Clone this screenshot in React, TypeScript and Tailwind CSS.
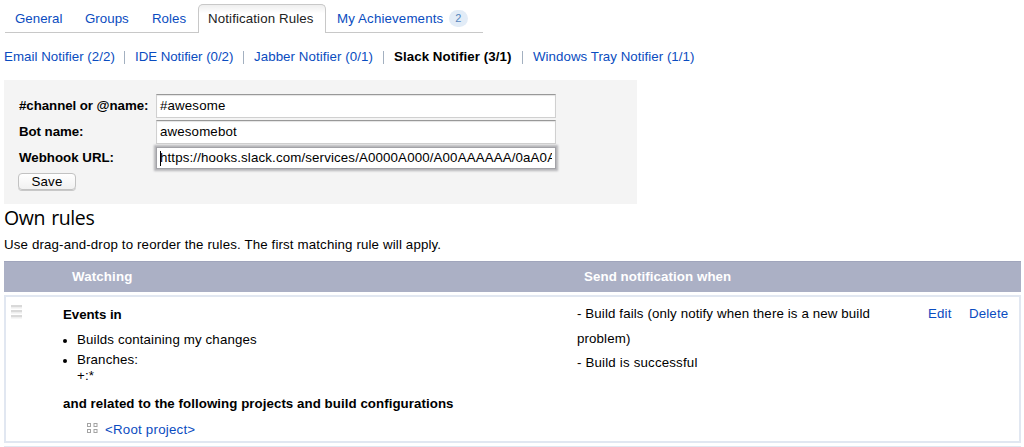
const link = "text-[#0a4cc0]";

const tabs = [
  { label: "General", cls: "ml-[10px] w-[70px]" },
  { label: "Groups", cls: "w-[67px]" },
  { label: "Roles", cls: "w-[46px]" },
];

const fields = [
  { label: "#channel or @name:", value: "#awesome" },
  { label: "Bot name:", value: "awesomebot" },
];

function Field({ label, value }: { label: string; value: string }) {
  return (
    <div className="flex h-[26px] items-center">
      <span className="w-[137px] font-bold tracking-[-0.06px] whitespace-nowrap">{label}</span>
      <div className="h-6 w-[400px] border border-[#d0d0d0] border-t-[#989898] bg-white pl-[3px] leading-[22px] shadow-[inset_0_1px_1px_#e4e4e4]">
        {value}
      </div>
    </div>
  );
}

function Separator() {
  return <span className="mt-[2px] h-[13px] w-px bg-[#a3b0c0]" />;
}

function GripIcon() {
  return (
    <svg width="11" height="14" viewBox="0 0 11 14" className="mt-[8px] ml-[5px] shrink-0">
      {[0, 5, 10].map((y) => (
        <g key={y}>
          <rect y={y} width="11" height="2" fill="#d9d9d9" />
          <rect y={y + 2} width="11" height="1.5" fill="#eeeeee" />
        </g>
      ))}
    </svg>
  );
}

function ProjectIcon() {
  return (
    <svg width="11" height="11" viewBox="0 0 11 11" fill="none" stroke="#a4a4a4" className="-mt-[3px] mr-[7px]">
      <rect x="0.5" y="0.5" width="3" height="3" />
      <rect x="7" y="0.5" width="3" height="3" />
      <rect x="0.5" y="6.5" width="3" height="3" />
      <rect x="7" y="6.5" width="3" height="3" />
    </svg>
  );
}

export default function App() {
  return (
    <div className="flex h-[447px] w-[1024px] flex-col overflow-hidden bg-white pl-1 font-['Liberation_Sans',Arial,sans-serif] text-[13.3px] leading-4 tracking-[0.14px] text-black">
      <nav className="flex h-[33px] shrink-0 pt-1 pl-px">
        <div className={`flex w-[193px] border-b border-[#c8c8c8] pt-[7px] tracking-[0.02px] ${link}`}>
          {tabs.map((t) => (
            <a key={t.label} className={`shrink-0 whitespace-nowrap ${t.cls}`}>{t.label}</a>
          ))}
        </div>
        <div className="w-[128px] rounded-t-[5px] border border-b-0 border-[#c8c8c8] bg-linear-to-b from-[#eeeeee] to-white to-30% pt-[6px] pl-[9px] tracking-[0.12px] whitespace-nowrap text-[#222]">
          Notification Rules
        </div>
        <div className={`flex w-[157px] border-b border-[#c8c8c8] pt-[7px] pl-[11px] ${link}`}>
          <span className="w-[112px] whitespace-nowrap">My Achievements</span>
          <span className="-mt-px h-[17px] w-[19px] rounded-full bg-[#e2ecf7] text-center text-[11px] leading-[17px] text-[#5584bd]">2</span>
        </div>
      </nav>

      <div className={`mt-4 flex h-4 shrink-0 tracking-[0.04px] whitespace-nowrap ${link}`}>
        <a className="w-[120px]">Email Notifier (2/2)</a>
        <Separator />
        <a className="ml-[10px] w-[108px] tracking-[-0.04px]">IDE Notifier (0/2)</a>
        <Separator />
        <a className="ml-[10px] w-[129px] tracking-[0.07px]">Jabber Notifier (0/1)</a>
        <Separator />
        <b className="ml-[10px] w-[128px] tracking-[0.07px] text-black">Slack Notifier (3/1)</b>
        <Separator />
        <a className="ml-[10px]">Windows Tray Notifier (1/1)</a>
      </div>

      <section className="mt-[15px] h-[124px] w-[633px] shrink-0 bg-[#f4f4f4] pt-[13px] pl-[15px]">
        {fields.map((f) => (
          <Field key={f.label} {...f} />
        ))}
        <div className="flex h-[26px] items-center">
          <span className="w-[137px] font-bold tracking-normal">Webhook URL:</span>
          <div className="flex h-[22px] w-[400px] items-center border border-[#a2a2a7] bg-white px-[3px] shadow-[0_0_2px_2px_#b4b4b8]">
            <span className="-mr-px h-[15px] w-px shrink-0 bg-black" />
            <span className="overflow-hidden whitespace-nowrap">
              https://hooks.slack.com/services/A0000A000/A00AAAAAA/0aA0A
            </span>
          </div>
        </div>
        <button className="-ml-px mt-[2px] block h-[17px] w-[58px] rounded-[4px] border border-[#c2c2c2] bg-linear-to-b from-white to-[#f1f1f1] text-center leading-[16px] shadow-[0_1px_0_#c8c8c8]">
          Save
        </button>
      </section>

      <h2 className="mt-px h-6 shrink-0 font-['Open_Sans','Noto_Sans',sans-serif] text-[19.5px] leading-[25px] tracking-[-0.4px] [word-spacing:1.5px]">Own rules</h2>
      <p className="mt-[8px] h-4 shrink-0">Use drag-and-drop to reorder the rules. The first matching rule will apply.</p>

      <div className="mt-[8px] flex h-[31px] w-[1017px] shrink-0 border-t border-[#a0a5bc] bg-[#abb0c5] pt-[7px] font-bold text-white">
        <span className="w-[580px] pl-[68px]">Watching</span>
        <span className="tracking-[0.08px]">Send notification when</span>
      </div>

      <div className="mt-[3px] flex h-[148px] w-[1017px] shrink-0 border-2 border-[#e1e7f1]">
        <GripIcon />
        <div className="ml-[41px] w-[514px] shrink-0 pt-[10px]">
          <b className="block tracking-[-0.05px]">Events in</b>
          <ul className="mt-[9px] ml-[14px] list-none">
            <li className="flex">
              <span className="mt-[7px] -ml-[14px] mr-[10px] h-1 w-1 rounded-full bg-black" />
              Builds containing my changes
            </li>
            <li className="mt-[4px] flex">
              <span className="mt-[7px] -ml-[14px] mr-[10px] h-1 w-1 rounded-full bg-black" />
              <span>Branches:<br />+:*</span>
            </li>
          </ul>
          <b className="mt-[12px] block tracking-[0.055px] whitespace-nowrap">and related to the following projects and build configurations</b>
          <div className="mt-[10px] ml-6 flex items-center">
            <ProjectIcon />
            <a className={`tracking-[0.22px] ${link}`}>&lt;Root project&gt;</a>
          </div>
        </div>
        <div className="w-[351px] shrink-0 pt-[5px] leading-[24.5px] tracking-[0.12px]">
          - Build fails (only notify when there is a new build<br />problem)
          <br /><span className="tracking-[0.18px]">- Build is successful</span>
        </div>
        <a className={`w-[41px] shrink-0 pt-[9px] ${link}`}>Edit</a>
        <a className={`pt-[9px] ${link}`}>Delete</a>
      </div>
      <div className="mt-[3px] h-px w-[1017px] shrink-0 bg-[#e1e7f1]" />
    </div>
  );
}
